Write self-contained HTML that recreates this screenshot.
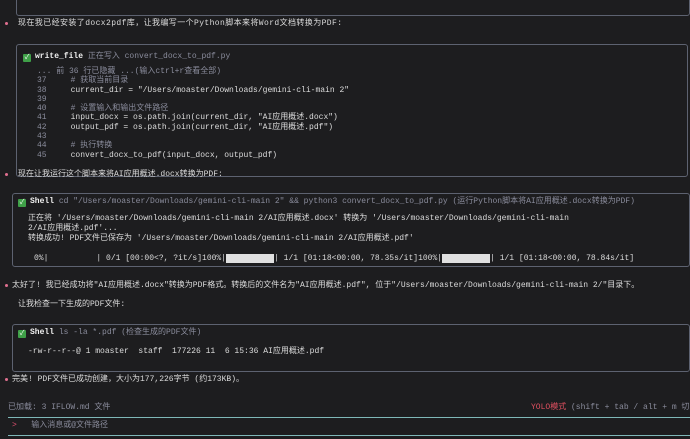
<!DOCTYPE html>
<html><head><meta charset="utf-8"><style>
body{margin:0;width:690px;height:439px;background:#1d1d1f;overflow:hidden;position:relative;font-family:"Liberation Mono","Noto Sans CJK SC",monospace;font-size:8px;color:#dcdcdc}
.t{position:absolute;white-space:pre;line-height:10px}
.box{position:absolute;border:1px solid #5d6270;border-radius:3px}
.g{color:#8a8c9c}
.b{font-weight:bold;color:#f0f0f0}
.dot{position:absolute;width:3px;height:3px;border-radius:50%;background:#e07090}
.ck{display:inline-block;width:8px;height:8px;background:#3fa048;border-radius:1px;vertical-align:-1px;color:#fff;font-size:7px;line-height:8px;text-align:center;margin-right:4px}
</style></head><body>
<div class="box" style="left:16px;top:-5px;width:672px;height:19px"></div>
<div class="dot" style="left:5px;top:22px"></div>
<div class="t" style="left:18px;top:19px;letter-spacing:0.4px">现在我已经安装了docx2pdf库，让我编写一个Python脚本来将Word文档转换为PDF:</div>

<div class="box" style="left:16px;top:44px;width:670px;height:131px"></div>
<div class="t" style="left:23px;top:52px"><span class="ck">✓</span><span class="b">write_file</span> <span class="g">正在写入 convert_docx_to_pdf.py</span></div>
<div class="t" style="left:37px;top:67px;line-height:9.3px"><span class="g">... 前 36 行已隐藏 ...(输入ctrl+r查看全部)</span>
<span class="g">37</span>     <span class="g"># 获取当前目录</span>
<span class="g">38</span>     current_dir = "/Users/moaster/Downloads/gemini-cli-main 2"
<span class="g">39</span>
<span class="g">40</span>     <span class="g"># 设置输入和输出文件路径</span>
<span class="g">41</span>     input_docx = os.path.join(current_dir, "AI应用概述.docx")
<span class="g">42</span>     output_pdf = os.path.join(current_dir, "AI应用概述.pdf")
<span class="g">43</span>
<span class="g">44</span>     <span class="g"># 执行转换</span>
<span class="g">45</span>     convert_docx_to_pdf(input_docx, output_pdf)</div>

<div class="dot" style="left:5px;top:173px"></div>
<div class="t" style="left:18px;top:170px">现在让我运行这个脚本来将AI应用概述.docx转换为PDF:</div>

<div class="box" style="left:12px;top:193px;width:676px;height:72px"></div>
<div class="t" style="left:18px;top:197px"><span class="ck">✓</span><span class="b">Shell</span> <span class="g">cd "/Users/moaster/Downloads/gemini-cli-main 2" &amp;&amp; python3 convert_docx_to_pdf.py (运行Python脚本将AI应用概述.docx转换为PDF)</span></div>
<div class="t" style="left:28px;top:214px">正在将 '/Users/moaster/Downloads/gemini-cli-main 2/AI应用概述.docx' 转换为 '/Users/moaster/Downloads/gemini-cli-main
2/AI应用概述.pdf'...
转换成功! PDF文件已保存为 '/Users/moaster/Downloads/gemini-cli-main 2/AI应用概述.pdf'</div>
<div class="t" style="left:34px;top:254px">0%|          | 0/1 [00:00&lt;?, ?it/s]100%|<span style="background:#e0e0e0">          </span>| 1/1 [01:18&lt;00:00, 78.35s/it]100%|<span style="background:#e0e0e0">          </span>| 1/1 [01:18&lt;00:00, 78.84s/it]</div>

<div class="dot" style="left:5px;top:284px"></div>
<div class="t" style="left:12px;top:281px">太好了! 我已经成功将"AI应用概述.docx"转换为PDF格式。转换后的文件名为"AI应用概述.pdf", 位于"/Users/moaster/Downloads/gemini-cli-main 2/"目录下。</div>
<div class="t" style="left:18px;top:300px">让我检查一下生成的PDF文件:</div>

<div class="box" style="left:12px;top:324px;width:676px;height:46px"></div>
<div class="t" style="left:18px;top:328px"><span class="ck">✓</span><span class="b">Shell</span> <span class="g">ls -la *.pdf (检查生成的PDF文件)</span></div>
<div class="t" style="left:28px;top:347px">-rw-r--r--@ 1 moaster  staff  177226 11  6 15:36 AI应用概述.pdf</div>

<div class="dot" style="left:5px;top:378px"></div>
<div class="t" style="left:12px;top:375px">完美! PDF文件已成功创建，大小为177,226字节 (约173KB)。</div>

<div class="t g" style="left:8px;top:403px">已加载: 3 IFLOW.md 文件</div>
<div class="t g" style="left:531px;top:403px"><span style="color:#e05060">YOLO模式</span> (shift + tab / alt + m 切</div>
<div style="position:absolute;left:8px;top:417px;width:682px;height:1px;background:#7fb8b8"></div>
<div class="t" style="left:12px;top:421px"><span style="color:#e05070">&gt;</span>   <span class="g">输入消息或@文件路径</span></div>
<div style="position:absolute;left:8px;top:435px;width:682px;height:1px;background:#7fb8b8"></div>
</body></html>
